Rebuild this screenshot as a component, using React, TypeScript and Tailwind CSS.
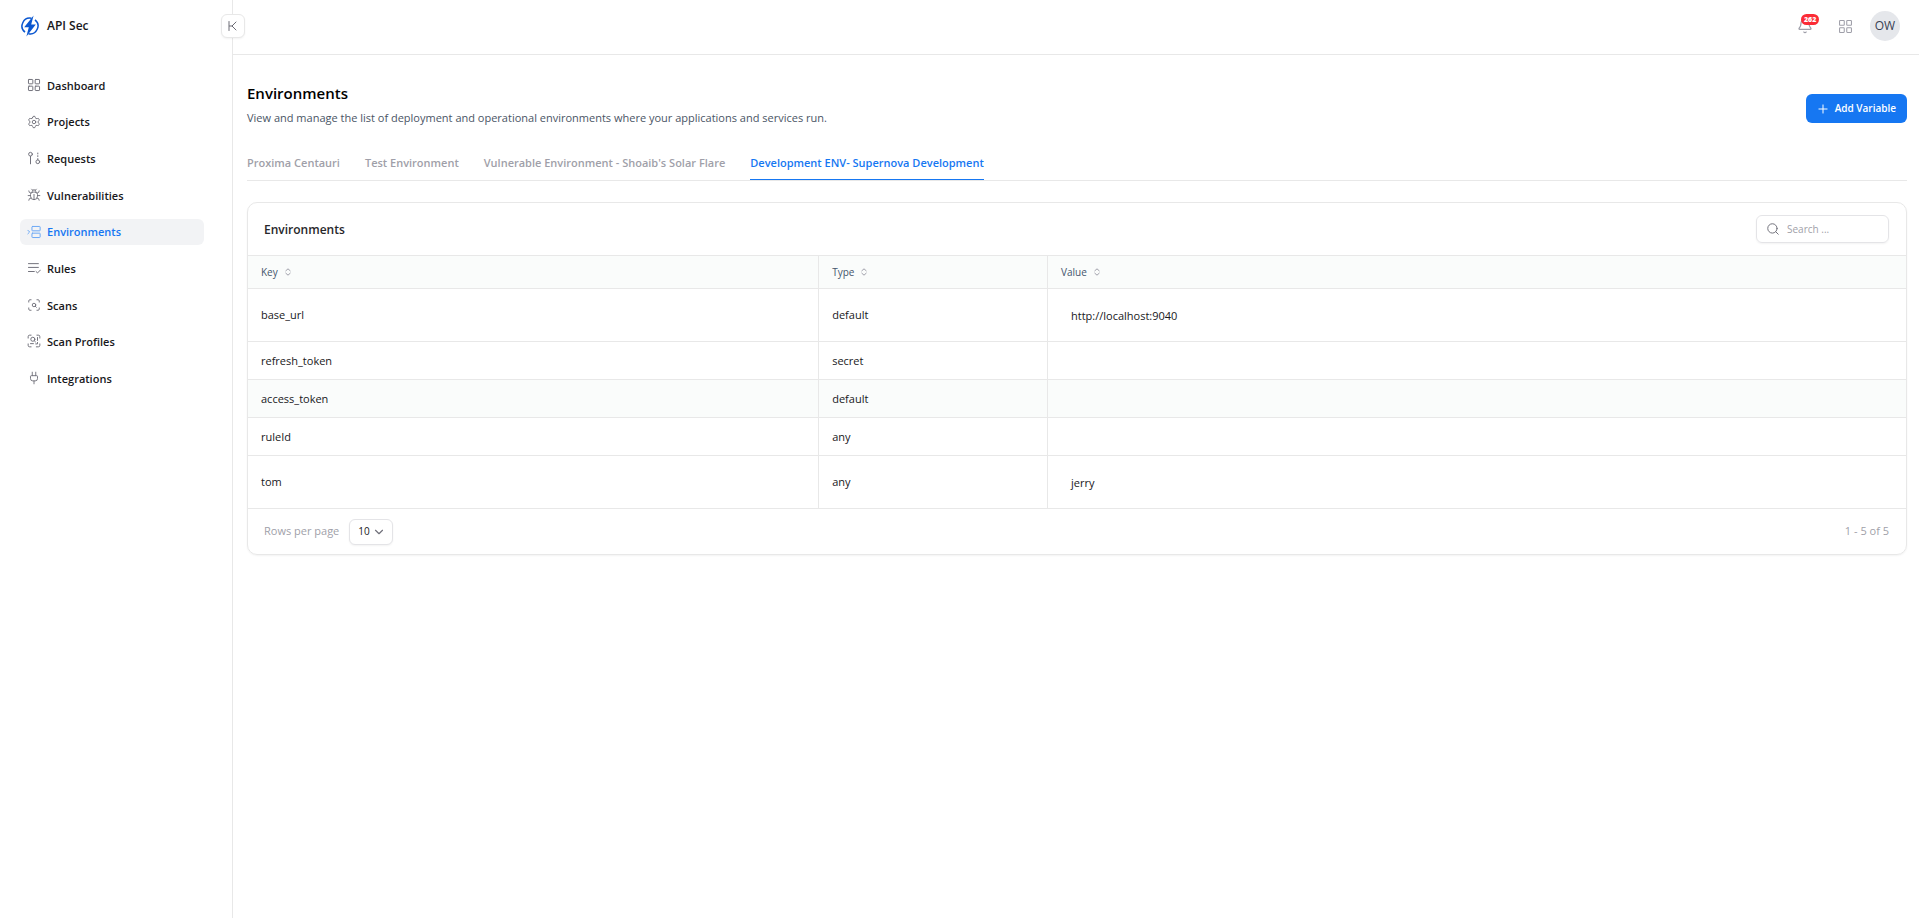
import type { ReactNode } from "react";
import { Bell, Bug, ChevronDown, Plug, Plus, ScanSearch, Search, Settings } from "lucide-react";
import clsx from "clsx";

const Icon = ({ children, className = "size-3.5" }: { children: ReactNode; className?: string }) => (
  <svg
    viewBox="0 0 24 24"
    fill="none"
    stroke="currentColor"
    strokeWidth={1.7}
    strokeLinecap="round"
    strokeLinejoin="round"
    className={className}
    aria-hidden="true"
  >
    {children}
  </svg>
);

const GridIcon = ({ className }: { className?: string }) => (
  <Icon className={className}>
    <rect x="2.5" y="2.5" width="7.5" height="7.5" rx="1" />
    <rect x="14" y="2.5" width="7.5" height="7.5" rx="1" />
    <rect x="2.5" y="14" width="7.5" height="7.5" rx="1" />
    <rect x="14" y="14" width="7.5" height="7.5" rx="1" />
  </Icon>
);

const RequestsIcon = () => (
  <Icon>
    <circle cx="6" cy="5.5" r="3.2" />
    <path d="M6 9v13" />
    <circle cx="18.5" cy="18.5" r="3.2" />
    <path d="M18.5 15v-2M18.5 9.5V8M18.5 5V3.5" />
  </Icon>
);

const EnvironmentsIcon = () => (
  <Icon>
    <rect x="8.5" y="2.5" width="14" height="7.5" rx="1" />
    <rect x="8.5" y="14" width="14" height="7.5" rx="1" />
    <path d="M1.5 9l3 3-3 3" />
  </Icon>
);

const RulesIcon = () => (
  <Icon>
    <path d="M2.5 4.5h17M2.5 11h17M2.5 18h10M15.5 18l2.5 2.5 5-5" />
  </Icon>
);

const ScanProfilesIcon = () => (
  <Icon>
    <path d="M2 7V4.5A2.5 2.5 0 0 1 4.5 2H7M17 2h2.5A2.5 2.5 0 0 1 22 4.5V7M2 17v2.5A2.5 2.5 0 0 0 4.5 22H7M22 17v2.5a2.5 2.5 0 0 1-2.5 2.5H16" />
    <circle cx="10" cy="9" r="3.5" />
    <path d="M12.5 11.5l2 2M18 6v5M6 16.5h5M18 14.5V17h-3" />
  </Icon>
);

const CollapseIcon = () => (
  <Icon className="size-3">
    <path d="M4 3v18M18 4l-8 8 8 8M10 12H5" />
  </Icon>
);

const Logo = () => (
  <svg viewBox="0 0 18 22" className="h-[22px] w-[18px]" aria-hidden="true">
    <path
      d="M10.5 3.3A7.9 7.9 0 0 0 4 17.2M7.5 18.7A7.9 7.9 0 0 0 14 4.8"
      fill="none"
      stroke="#0b57d0"
      strokeWidth="1.5"
    />
    <path d="M12.6 0.5 3.2 12.2h4.6L5.4 21.5 14.8 9.6h-4.6z" fill="#0b57d0" />
  </svg>
);

const SortIcon = () => (
  <svg
    viewBox="0 0 6 8"
    fill="none"
    stroke="currentColor"
    strokeLinecap="round"
    strokeLinejoin="round"
    className="h-2 w-1.5 text-zinc-400"
    aria-hidden="true"
  >
    <path d="M0.8 2.8 3 0.8l2.2 2M0.8 5.2 3 7.2l2.2-2" />
  </svg>
);

const navItems = [
  { label: "Dashboard", icon: <GridIcon /> },
  { label: "Projects", icon: <Settings className="size-3.5" strokeWidth={1.6} /> },
  { label: "Requests", icon: <RequestsIcon /> },
  { label: "Vulnerabilities", icon: <Bug className="size-3.5" strokeWidth={1.6} /> },
  { label: "Environments", icon: <EnvironmentsIcon />, active: true },
  { label: "Rules", icon: <RulesIcon /> },
  { label: "Scans", icon: <ScanSearch className="size-3.5" strokeWidth={1.6} /> },
  { label: "Scan Profiles", icon: <ScanProfilesIcon /> },
  { label: "Integrations", icon: <Plug className="size-3.5" strokeWidth={1.6} /> },
];

const tabs = [
  "Proxima Centauri",
  "Test Environment",
  "Vulnerable Environment - Shoaib's Solar Flare",
  "Development ENV- Supernova Development",
];

const columns = ["Key", "Type", "Value"];

const variables = [
  { key: "base_url", type: "default", value: "http://localhost:9040" },
  { key: "refresh_token", type: "secret", value: "" },
  { key: "access_token", type: "default", value: "", highlighted: true },
  { key: "ruleId", type: "any", value: "" },
  { key: "tom", type: "any", value: "jerry" },
];

const Sidebar = () => (
  <aside className="relative w-[233px] shrink-0 border-r border-[#e8e8e8]">
    <a href="#" className="flex h-[52px] items-center gap-2 pl-[21px] text-[12px] font-semibold text-zinc-900">
      <Logo />
      API Sec
    </a>
    <button
      aria-label="Collapse sidebar"
      className="absolute top-3.5 -right-[13px] flex size-6 items-center justify-center rounded-md border border-[#e8e8e8] bg-white text-zinc-600 shadow-xs"
    >
      <CollapseIcon />
    </button>
    <nav className="mt-5 flex h-[319px] flex-col justify-between pr-7 pl-5">
      {navItems.map((item) => (
        <a
          key={item.label}
          href="#"
          className={clsx(
            "flex h-[26px] items-center gap-1.5 rounded-md pl-[7px] text-[11px] font-semibold",
            item.active ? "bg-[#f2f3f5] text-[#1677f2]" : "text-zinc-900"
          )}
        >
          <span className={item.active ? "text-[#6ba8f5]" : "text-zinc-500"}>{item.icon}</span>
          <span className="pt-0.5">{item.label}</span>
        </a>
      ))}
    </nav>
  </aside>
);

const Header = () => (
  <header className="flex h-[55px] items-center justify-end gap-[17px] border-b border-[#e8e8e8] pr-[19px] pb-0.5">
    <button aria-label="Notifications" className="relative text-zinc-400">
      <Bell className="size-4" strokeWidth={1.9} />
      <span className="absolute -top-1 left-1 rounded-full bg-[#fb2c36] px-[3px] text-[7px] leading-[11px] font-extrabold text-white">
        262
      </span>
    </button>
    <button aria-label="Apps" className="ml-2 text-zinc-400">
      <GridIcon className="size-[15px]" />
    </button>
    <button className="size-[30px] rounded-full bg-[#e5e7eb] text-[12px] font-medium text-gray-700">OW</button>
  </header>
);

const VariablesTable = () => (
  <table className="w-full table-fixed border-separate border-spacing-0 text-left">
    <colgroup>
      <col className="w-[34.45%]" />
      <col className="w-[13.8%]" />
      <col />
    </colgroup>
    <thead>
      <tr className="bg-[#fafcfb]">
        {columns.map((column) => (
          <th
            key={column}
            className="h-[34px] border-y border-r border-[#e8e8e8] pl-[13px] text-[10px] font-normal text-slate-600 last:border-r-0"
          >
            <button className="flex items-center gap-[7px]">
              {column}
              <SortIcon />
            </button>
          </th>
        ))}
      </tr>
    </thead>
    <tbody className="text-[11px] text-zinc-900">
      {variables.map((row) => (
        <tr key={row.key} className={row.highlighted ? "bg-[#fafcfb]" : ""}>
          <td className="h-[38px] border-r border-b border-[#e8e8e8] pt-px pl-[13px]">{row.key}</td>
          <td className="border-r border-b border-[#e8e8e8] pt-px pl-[13px]">{row.type}</td>
          <td className="border-b border-[#e8e8e8] pt-px pl-[13px]">
            {row.value && <div className="px-2.5 py-4 leading-[19px]">{row.value}</div>}
          </td>
        </tr>
      ))}
    </tbody>
  </table>
);

const App = () => (
  <div className="flex min-h-screen bg-white font-['Open_Sans','Noto_Sans',sans-serif] text-zinc-900">
    <Sidebar />
    <div className="min-w-0 flex-1">
      <Header />
      <main className="pt-[26px] pr-3 pl-3.5">
        <div className="flex items-center justify-between">
          <div>
            <h1 className="text-[15px] leading-6 font-semibold text-black">Environments</h1>
            <p className="mt-[3px] text-[11px] leading-5 text-gray-600">
              View and manage the list of deployment and operational environments where your applications and services
              run.
            </p>
          </div>
          <button className="mt-2 flex h-[29px] items-center gap-[5px] rounded-md bg-[#1677f2] pr-[11px] pl-2.5 text-[10px] font-semibold text-white">
            <Plus className="size-3.5" strokeWidth={1.7} />
            Add Variable
          </button>
        </div>

        <div role="tablist" className="mt-[17px] flex gap-[25px] border-b border-[#e8e8e8]">
          {tabs.map((tab, i) => (
            <button
              key={tab}
              role="tab"
              aria-selected={i === 3}
              className={clsx(
                "h-[35px] border-b pt-0.5 text-[11px] font-semibold",
                i === 3 ? "border-[#1677f2] text-[#1677f2]" : "border-transparent text-zinc-400"
              )}
            >
              {tab}
            </button>
          ))}
        </div>

        <section className="mt-[21px] overflow-hidden rounded-[10px] border border-[#e8e8e8] shadow-xs">
          <div className="flex h-[52px] items-center justify-between pr-[17px] pl-4">
            <h2 className="pt-px text-[12px] font-semibold text-zinc-800">Environments</h2>
            <label className="flex h-7 w-[133px] items-center gap-[7px] rounded-md border border-[#e4e4e7] px-[9px] shadow-xs">
              <Search className="size-3.5 shrink-0 text-zinc-500" strokeWidth={1.7} />
              <input
                type="text"
                aria-label="Search"
                placeholder="Search ..."
                className="w-full min-w-0 text-[10px] outline-none placeholder:text-zinc-400"
              />
            </label>
          </div>
          <VariablesTable />
          <div className="flex h-[45px] items-center justify-between pr-[17px] pl-4 text-[11px] text-zinc-400">
            <label className="flex items-center gap-2.5">
              Rows per page
              <span className="relative flex items-center">
                <select className="h-[26px] w-11 appearance-none rounded-md border border-[#e4e4e7] bg-white pl-2 text-[10px] text-zinc-900 shadow-xs">
                  <option>10</option>
                </select>
                <ChevronDown className="pointer-events-none absolute right-[7px] size-3.5 text-zinc-500" />
              </span>
            </label>
            <span>1 - 5 of 5</span>
          </div>
        </section>
      </main>
    </div>
  </div>
);

export default App;
